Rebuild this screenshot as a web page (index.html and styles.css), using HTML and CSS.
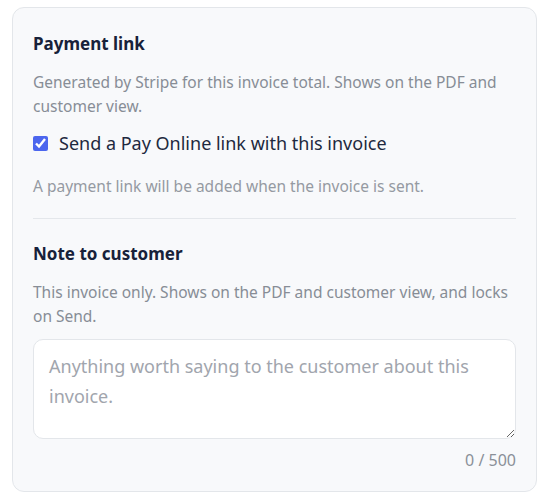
FILE: index.html
```
<!DOCTYPE html>
<html lang="en">
<head>
    <meta charset="UTF-8">
    <meta name="viewport" content="width=device-width, initial-scale=1.0">
    <title>Invoice Options</title>
    <link rel="stylesheet" href="styles.css">
</head>
<body>
    <div class="card">
        <section class="block">
            <h3>Payment link</h3>
            <p class="hint">Generated by Stripe for this invoice total. Shows on the PDF and customer view.</p>
            <label class="check">
                <input type="checkbox" checked>
                <span>Send a Pay Online link with this invoice</span>
            </label>
            <p class="note">A payment link will be added when the invoice is sent.</p>
        </section>
        <hr class="divider">
        <section class="block">
            <h3>Note to customer</h3>
            <p class="hint">This invoice only. Shows on the PDF and customer view, and locks on Send.</p>
            <textarea class="message" placeholder="Anything worth saying to the customer about this invoice."></textarea>
            <div class="counter">0 / 500</div>
        </section>
    </div>
</body>
</html>
```

FILE: styles.css
```
body {
    margin: 0;
    padding: 7px 0 0 12px;
    font-family: "Noto Sans", sans-serif;
    background: #ffffff;
    color: #1e293b;
}
.card {
    width: 483px;
    padding: 22px 20px 19px 20px;
    background: #f8f9fb;
    border: 1px solid #e3e6ea;
    border-radius: 12px;
}
.block h3 {
    margin: 0;
    font-size: 17px;
    font-weight: 700;
    line-height: 28px;
    color: #17213a;
}
.hint {
    margin: 12px 0 0;
    font-size: 15.5px;
    line-height: 24px;
    color: #878d96;
}
.check {
    display: flex;
    align-items: center;
    gap: 11px;
    margin-top: 13px;
    font-size: 18px;
    line-height: 24px;
    color: #1e2940;
}
.check input {
    width: 15px;
    height: 15px;
    margin: 0;
    accent-color: #4c66ee;
}
.note {
    margin: 19px 0 0;
    font-size: 15.5px;
    line-height: 24px;
    color: #959aa2;
}
.divider {
    border: none;
    border-top: 1px solid #e4e7eb;
    margin: 20px 0 21px;
}
.message {
    display: block;
    box-sizing: border-box;
    width: 100%;
    height: 100px;
    margin-top: 11px;
    padding: 11px 15px;
    font-family: inherit;
    font-size: 18px;
    line-height: 30px;
    color: #1e293b;
    background: #fff;
    border: 1px solid #e3e6ea;
    border-radius: 10px;
    resize: vertical;
}
.message::placeholder {
    color: #a1a5ad;
}
.counter {
    margin-top: 9px;
    text-align: right;
    font-size: 16px;
    line-height: 24px;
    color: #8a9098;
}
```
